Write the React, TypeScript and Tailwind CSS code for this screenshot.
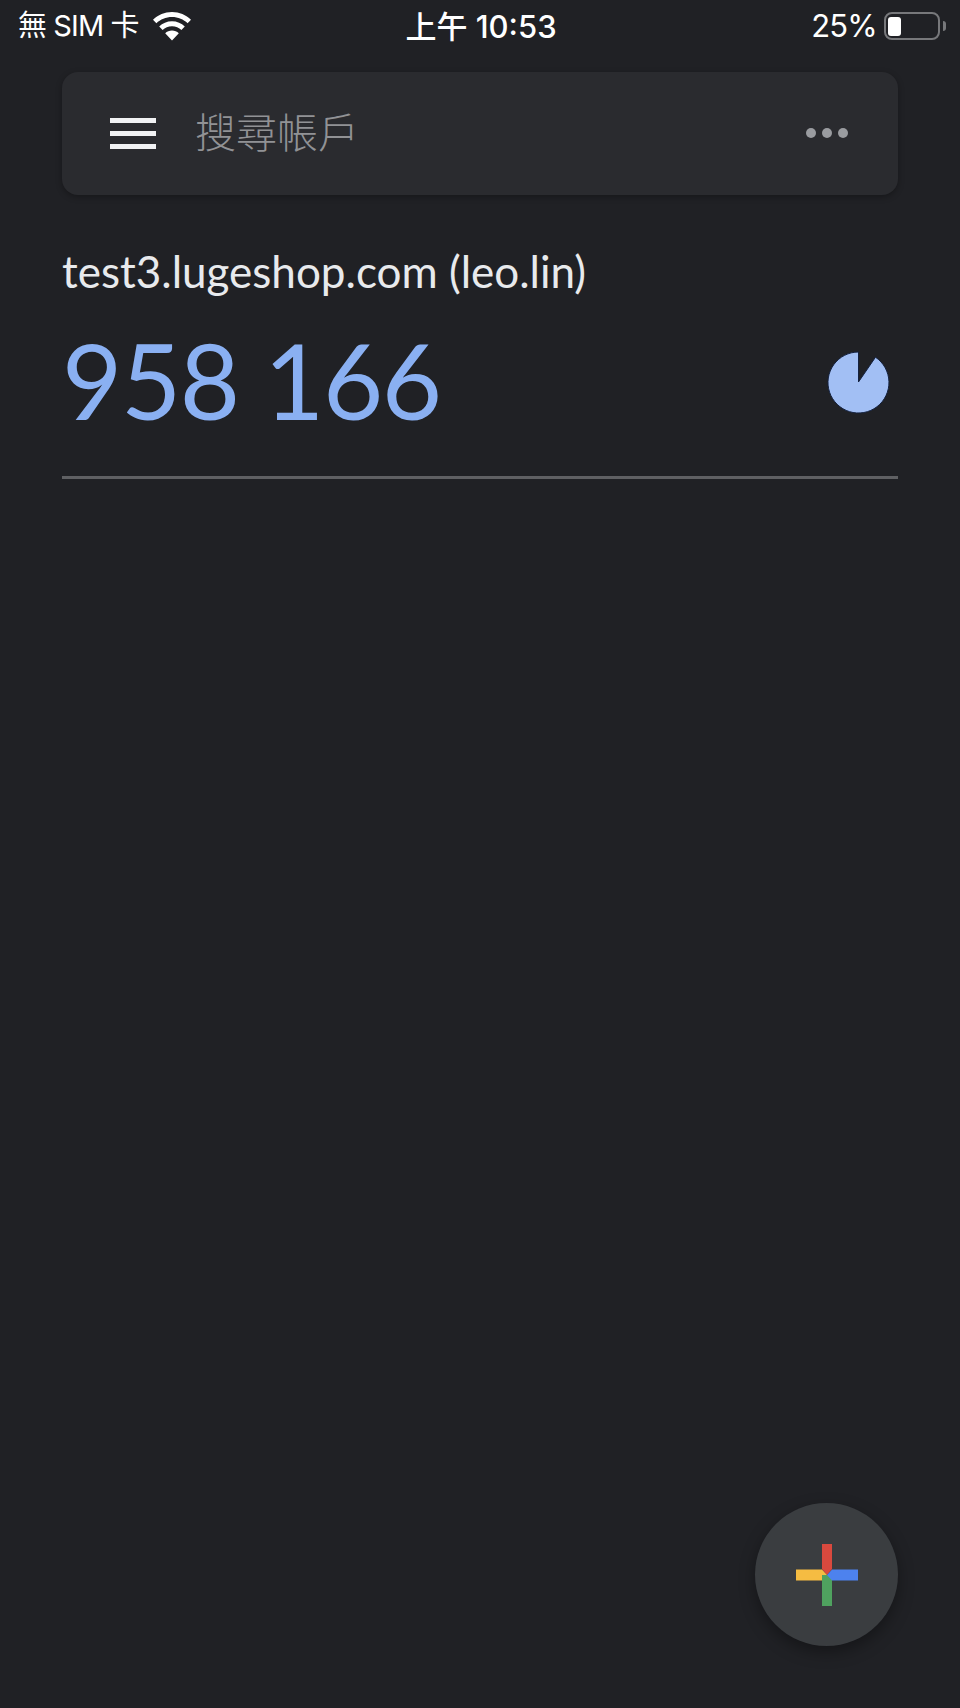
export default function App() {
  return (
    <div className="relative h-[1708px] w-[960px] overflow-hidden bg-[#202125] font-['Lato','Noto_Sans_CJK_TC',sans-serif]">
      <div className="flex h-[52px] items-center justify-between pl-[18px] pr-[14px] text-white">
        <div className="flex w-[300px] items-center">
          <span className="font-['Inter','Noto_Sans_CJK_TC',sans-serif] text-[29px] leading-[34px] tracking-[-0.9px]">無 SIM 卡</span>
          <svg className="ml-[13px]" width="40" height="30" viewBox="0 0 40 30" fill="white">
            <path d="M20 1C12.6 1 6 3.9 1 8.7l3.4 3.6C8.4 8.500 13.900 6.100 20 6.100s11.600 2.400 15.600 6.200L39 8.700C34 3.900 27.400 1 20 1z" />
            <path d="M20 10.200c-5 0-9.500 2-12.800 5.200l3.400 3.600c2.400-2.300 5.700-3.700 9.400-3.700s7 1.400 9.400 3.700l3.400-3.600C29.500 12.200 25 10.200 20 10.200z" />
            <path d="M20 19.400c-2.600 0-5 1-6.800 2.800L20 29.400l6.800-7.200c-1.800-1.800-4.200-2.800-6.800-2.800z" />
          </svg>
        </div>
        <span className="-translate-x-[1px] translate-y-[1px] font-['Inter','Noto_Sans_CJK_TC',sans-serif] text-[31px] font-medium leading-[34px]">上午 10:53</span>
        <div className="flex w-[300px] items-center justify-end">
          <span className="font-['Inter',sans-serif] text-[31px] leading-[34px] tracking-[-0.8px]">25%</span>
          <div className="ml-[7px] flex h-[28px] w-[56px] items-center rounded-[8px] border-2 border-[#77787b] p-[2px]">
            <div className="h-[19px] w-[13px] rounded-[3px] bg-white" />
          </div>
          <div className="ml-[3px] h-[10px] w-[3px] rounded-r-full bg-[#77787b]" />
        </div>
      </div>

      <div className="mx-[62px] mt-[20px] flex h-[123px] items-center rounded-[16px] bg-[#2a2b2f] pl-[48px] pr-[50px] shadow-[0_2px_6px_rgba(0,0,0,0.3)]">
        <div className="flex w-[46px] flex-col gap-[8px]">
          <div className="h-[5px] bg-[#f1f2f4]" />
          <div className="h-[5px] bg-[#f1f2f4]" />
          <div className="h-[5px] bg-[#f1f2f4]" />
        </div>
        <span className="ml-[39px] flex-1 -translate-y-[4px] font-['Noto_Sans_CJK_TC',sans-serif] text-[41px] font-light leading-[48px] text-[#919295]">搜尋帳戶</span>
        <div className="flex -translate-y-[1px] gap-[6px]">
          <div className="h-[10px] w-[10px] rounded-full bg-[#9a9ca0]" />
          <div className="h-[10px] w-[10px] rounded-full bg-[#9a9ca0]" />
          <div className="h-[10px] w-[10px] rounded-full bg-[#9a9ca0]" />
        </div>
      </div>

      <div className="mx-[62px] mt-[50px] border-b-[3px] border-[#5f6063] pb-[32px]">
        <div className="text-[44px] leading-[52px] text-[#e8eaed]">test3.lugeshop.com (leo.lin)</div>
        <div className="mt-[19px] flex items-center justify-between pr-[8px]">
          <span className="text-[104px] font-normal leading-[128px] tracking-[-1.4px] text-[#8ab0f2]">958 166</span>
          <svg className="mt-[4px]" width="63" height="63" viewBox="0 0 63 63">
            <path d="M31.500 1A30.500 30.500 0 1 0 48.500 6.200L31.500 31z" fill="#a2bff4" stroke="#14213f" strokeWidth="1" />
          </svg>
        </div>
      </div>

      <button className="absolute left-[755px] top-[1503px] flex h-[143px] w-[143px] items-center justify-center rounded-full bg-[#3a3d40] shadow-[0_6px_16px_rgba(0,0,0,0.35)]">
        <svg width="62" height="62" viewBox="0 0 62 62">
          <path d="M26 0h10v25l-5 6-5-6z" fill="#d9493e" />
          <path d="M0 25.500h26l5 5.500-5 5.500H0z" fill="#f5bc42" />
          <path d="M26 62V31h10v31z" fill="#4fa25f" />
          <path d="M62 25.500v11H36l-5-5.500 5-5.500z" fill="#4d82ee" />
        </svg>
      </button>
    </div>
  );
}
